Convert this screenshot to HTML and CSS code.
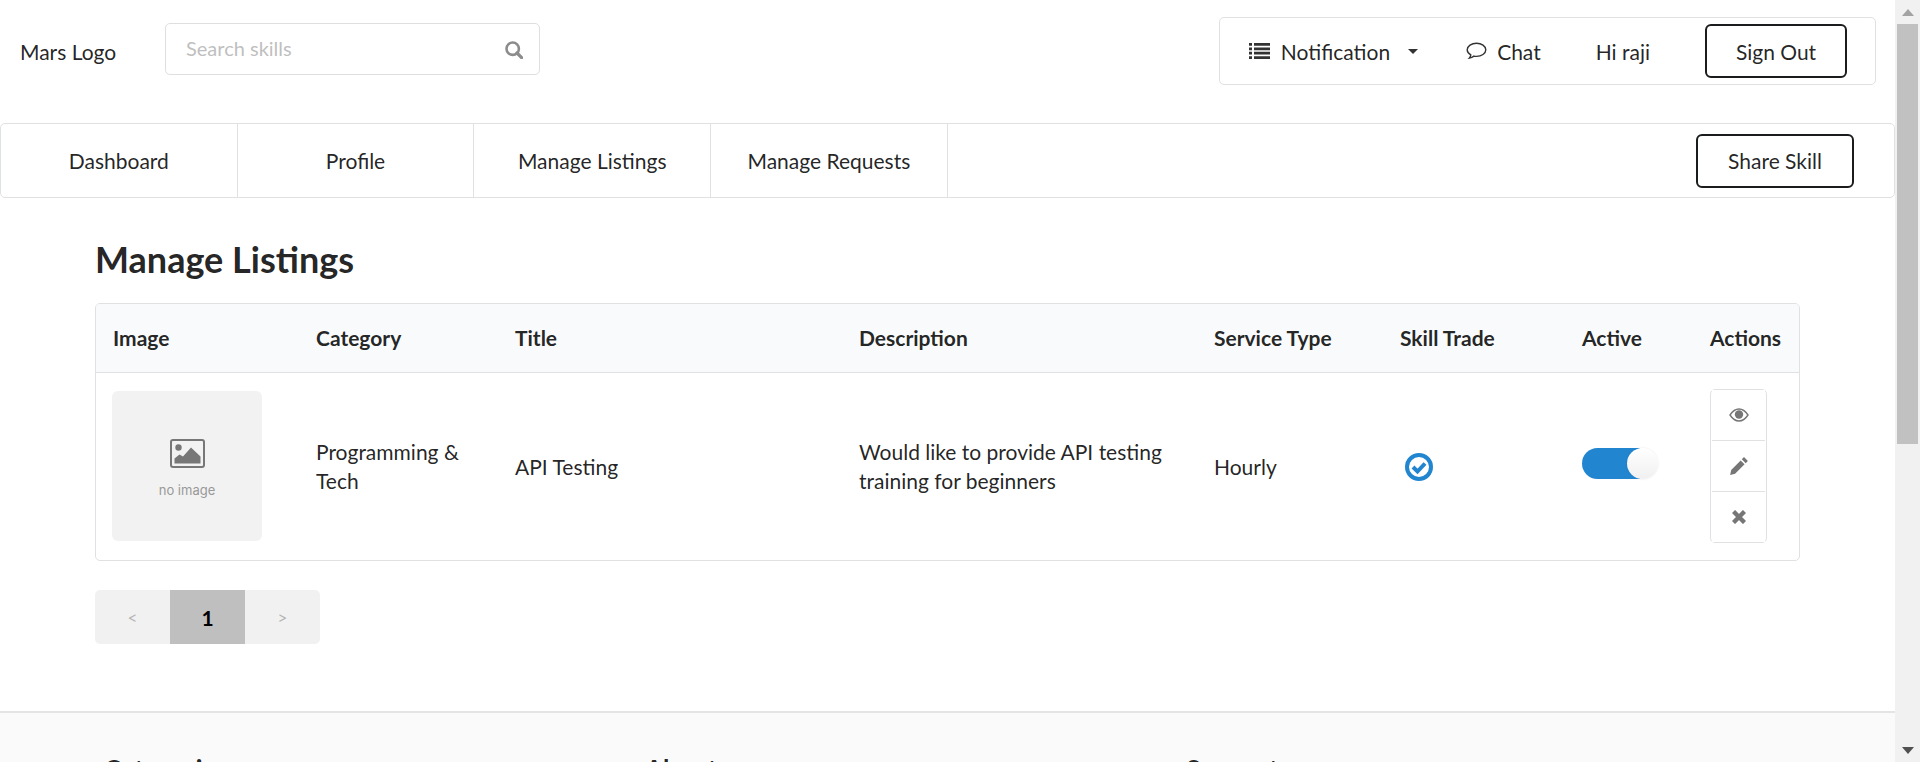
FILE: index.html
```html
<!DOCTYPE html>
<html lang="en">
<head>
<meta charset="utf-8">
<title>Manage Listings</title>
<link rel="stylesheet" href="styles.css">
</head>
<body>
<div class="page">
  <div class="main">
    <header class="top">
      <div class="logo">Mars Logo</div>
      <div class="search">
        <input class="search-input" type="text" placeholder="Search skills">
        <svg class="search-icon" viewBox="0 0 18 18" width="18" height="18"><circle cx="7.7" cy="7.7" r="6.2" fill="none" stroke="#8c8c8c" stroke-width="2.6"/><path d="M12 12l4.6 4.6" stroke="#8c8c8c" stroke-width="3.2" stroke-linecap="round"/></svg>
      </div>
      <div class="user-menu">
        <svg class="i-list" viewBox="0 0 21 16" width="21" height="16"><path d="M0 0h3v2.8H0zM5 0h16v2.8H5zM0 4.4h3v2.8H0zM5 4.4h16v2.8H5zM0 8.8h3v2.8H0zM5 8.8h16v2.8H5zM0 13.2h3V16H0zM5 13.2h16V16H5z" fill="#333"/></svg>
        <span class="m-notif">Notification</span>
        <svg class="i-caret" viewBox="0 0 10 5" width="10" height="5"><path d="M0 0h10L5 5z" fill="#333"/></svg>
        <svg class="i-chat" viewBox="0 0 21 18" width="21" height="18"><path d="M10.5 1.2c5 0 9.3 2.9 9.3 6.6s-4.3 6.6-9.3 6.6c-.9 0-1.8-.1-2.6-.3-1.2 1-2.8 1.7-4.6 2 .8-.9 1.4-2 1.5-3.2C2.7 11.7 1.2 9.9 1.2 7.8c0-3.7 4.3-6.6 9.3-6.6z" fill="none" stroke="#333" stroke-width="1.4"/></svg>
        <span class="m-chat">Chat</span>
        <span class="m-hi">Hi raji</span>
        <button class="btn btn-sign" type="button">Sign Out</button>
      </div>
    </header>

    <nav class="nav">
      <a class="nav-item">Dashboard</a>
      <a class="nav-item">Profile</a>
      <a class="nav-item">Manage Listings</a>
      <a class="nav-item">Manage Requests</a>
      <button class="btn btn-share" type="button">Share Skill</button>
    </nav>

    <section class="content">
      <h2 class="title">Manage Listings</h2>
      <div class="table-box">
        <table class="listing">
          <colgroup>
            <col class="c1"><col class="c2"><col class="c3"><col class="c4"><col class="c5"><col class="c6"><col class="c7"><col class="c8">
          </colgroup>
          <thead>
            <tr>
              <th>Image</th><th>Category</th><th>Title</th><th>Description</th><th>Service Type</th><th>Skill Trade</th><th>Active</th><th>Actions</th>
            </tr>
          </thead>
          <tbody>
            <tr>
              <td>
                <div class="noimage">
                  <svg viewBox="0 0 35 29" width="35" height="29"><rect x="1" y="1" width="33" height="27" rx="2" fill="none" stroke="#777" stroke-width="2"/><circle cx="8.5" cy="8.5" r="3.2" fill="#777"/><path d="M4.5 24.5v-5l5-4 3.500 2 8-9 9.500 9v7z" fill="#777"/></svg>
                  <span class="noimage-text">no image</span>
                </div>
              </td>
              <td class="two-line">Programming &amp; Tech</td>
              <td>API Testing</td>
              <td class="two-line">Would like to provide API testing training for beginners</td>
              <td>Hourly</td>
              <td>
                <svg class="i-check" viewBox="0 0 28 28" width="28" height="28"><circle cx="14" cy="14" r="12" fill="none" stroke="#2185d0" stroke-width="4"/><path d="M8 14l4.500 4.500L20 10.500" fill="none" stroke="#2185d0" stroke-width="4"/></svg>
              </td>
              <td><div class="toggle"><span class="knob"></span></div></td>
              <td>
                <div class="actions">
                  <button class="act" type="button" aria-label="View"><svg viewBox="0 0 20 14" width="20" height="14"><path d="M1 7c2.500-3.800 5.500-6 9-6s6.500 2.200 9 6c-2.500 3.800-5.500 6-9 6s-6.500-2.200-9-6z" fill="none" stroke="#767676" stroke-width="1.400"/><circle cx="10" cy="6.500" r="4.200" fill="#767676"/></svg></button>
                  <button class="act" type="button" aria-label="Edit"><svg viewBox="0 0 18 18" width="20" height="20"><path d="M13.500 1l3.500 3.500-2 2L11.500 3zM10.500 4L14 7.500 5.500 16 1 17l1-4.500z" fill="#767676"/></svg></button>
                  <button class="act" type="button" aria-label="Delete"><svg viewBox="0 0 14 14" width="14" height="14"><path d="M1.500 1.500l11 11M12.500 1.500l-11 11" stroke="#767676" stroke-width="4.400"/></svg></button>
                </div>
              </td>
            </tr>
          </tbody>
        </table>
      </div>
      <div class="pager">
        <span class="pg pg-off">&lt;</span>
        <span class="pg pg-on">1</span>
        <span class="pg pg-off">&gt;</span>
      </div>
    </section>

    <footer class="footer">
      <h3 class="f-head">Categories</h3>
      <h3 class="f-head">About</h3>
      <h3 class="f-head">Support</h3>
    </footer>
  </div>

  <div class="scrollbar" aria-hidden="true">
    <div class="sb-btn"><svg viewBox="0 0 12 7" width="12" height="7"><path d="M6 0l6 7H0z" fill="#a3a3a3"/></svg></div>
    <div class="sb-thumb"></div>
    <div class="sb-rest"></div>
    <div class="sb-btn"><svg viewBox="0 0 12 7" width="12" height="7"><path d="M0 0h12L6 7z" fill="#505050"/></svg></div>
  </div>
</div>
</body>
</html>
```

FILE: styles.css
```css
* { box-sizing: border-box; }
html, body { margin: 0; padding: 0; height: 100%; }
body {
  font-family: "Lato", "Liberation Sans", sans-serif;
  font-size: 21px;
  line-height: 29px;
  color: rgba(0, 0, 0, 0.87);
  background: #fff;
}
.page { display: flex; height: 100vh; overflow: hidden; }
.main { flex: 1; min-width: 0; overflow: hidden; }

/* header */
.top { display: flex; align-items: flex-start; padding: 17px 19px 0 20px; }
.logo { width: 145px; padding-top: 20px; }
.search { position: relative; width: 375px; margin-top: 6px; }
.search-input {
  display: block;
  width: 100%;
  height: 52px;
  padding: 0 60px 2px 20px;
  border: 1px solid #dedfdf;
  border-radius: 5px;
  font: inherit;
  font-size: 20px;
  color: inherit;
  outline: none;
}
.search-input::placeholder { color: #bfbfbf; opacity: 1; }
.search-icon { position: absolute; top: 18px; right: 17px; }
.user-menu {
  display: flex;
  align-items: center;
  margin-left: auto;
  height: 68px;
  padding: 0 28px 0 29px;
  border: 1px solid #e0e1e2;
  border-radius: 5px;
}
.m-notif { margin-left: 11px; }
.i-caret { margin-left: 18px; }
.i-chat { margin-left: 48px; }
.m-chat { margin-left: 10px; }
.m-hi { margin-left: 55px; }
.btn {
  height: 54px;
  border: 2px solid #1b1c1d;
  border-radius: 6px;
  background: #fff;
  font: inherit;
  color: inherit;
  padding: 0;
}
.btn-sign { width: 142px; margin-left: 55px; }

/* nav */
.nav {
  display: flex;
  align-items: center;
  height: 75px;
  margin-top: 38px;
  border: 1px solid #e0e1e2;
  border-radius: 5px;
  padding-right: 40px;
}
.nav-item {
  display: flex;
  align-items: center;
  justify-content: center;
  width: 236.7px;
  height: 100%;
  border-right: 1px solid #e0e1e2;
}
.btn-share { width: 158px; margin-left: auto; }

/* content */
.content { padding: 0 95px; }
.title {
  margin: 40px 0 23px;
  font-size: 36px;
  line-height: 42px;
  font-weight: 700;
}
.table-box {
  border: 1px solid #e0e1e2;
  border-radius: 5px;
  overflow: hidden;
}
.listing {
  width: 100%;
  table-layout: fixed;
  border-collapse: separate;
  border-spacing: 0;
}
.c1 { width: 203px; }
.c2 { width: 199px; }
.c3 { width: 344px; }
.c4 { width: 355px; }
.c5 { width: 186px; }
.c6 { width: 182px; }
.c7 { width: 128px; }
.c8 { width: 106px; }
.listing th {
  height: 69px;
  padding: 0 0 2px 17px;
  background: #f9fafb;
  border-bottom: 1px solid #e0e1e2;
  font-weight: 700;
  text-align: left;
  white-space: nowrap;
}
.listing td { height: 187px; padding: 0 17px; vertical-align: middle; }
.listing td.two-line { padding-bottom: 2px; }
.noimage {
  display: flex;
  flex-direction: column;
  align-items: center;
  justify-content: center;
  width: 150px;
  height: 150px;
  margin: 0 0 2px -1px;
  padding-top: 7px;
  border-radius: 6px;
  background: #f2f2f2;
}
.noimage-text {
  margin-top: 13px;
  font-family: "Inter", sans-serif;
  font-size: 13px;
  line-height: 18px;
  color: #999;
}
.i-check { display: block; margin: 0 0 0 5px; }
.toggle {
  position: relative;
  width: 58px;
  height: 31px;
  margin-bottom: 7px;
  border-radius: 16px 0 0 16px;
  background: #2185d0;
}
.knob {
  position: absolute;
  top: 0;
  left: 45px;
  width: 31px;
  height: 31px;
  border-radius: 50%;
  background: linear-gradient(#fff, #f0f0f0);
  box-shadow: 0 0 2px rgba(34, 36, 38, 0.12);
}
.actions {
  display: flex;
  flex-direction: column;
  width: 57px;
  height: 154px;
  margin-bottom: 2px;
  border: 1px solid #e0e1e2;
  border-radius: 5px;
  padding: 0 1px;
}
.act {
  flex: 1;
  display: flex;
  align-items: center;
  justify-content: center;
  padding: 0;
  border: 0;
  background: #fff;
}
.act + .act { border-top: 1px solid #e0e1e2; }

/* pager */
.pager {
  display: flex;
  width: 225px;
  height: 54px;
  margin-top: 29px;
  border-radius: 5px;
  overflow: hidden;
}
.pg { flex: 1; display: flex; align-items: center; justify-content: center; }
.pg-off { background: #f1f1f1; color: #b5b5b5; font-size: 17px; }
.pg-on { background: #bfbfbf; color: #000; font-weight: 700; }

/* footer */
.footer {
  display: grid;
  grid-template-columns: 541px 541px 1fr;
  margin-top: 67px;
  padding: 40px 0 40px 104px;
  min-height: 200px;
  background: #fafafa;
  border-top: 2px solid #e4e4e4;
}
.f-head { margin: 0; font-size: 26px; line-height: 32px; font-weight: 700; }

/* scrollbar */
.scrollbar {
  display: flex;
  flex-direction: column;
  flex: none;
  width: 25px;
  background: #f1f1f1;
}
.sb-btn { flex: none; height: 24px; display: flex; align-items: center; justify-content: center; }
.sb-thumb { flex: none; height: 420px; margin: 0 2px; background: #c1c1c1; }
.sb-rest { flex: 1; }
```
